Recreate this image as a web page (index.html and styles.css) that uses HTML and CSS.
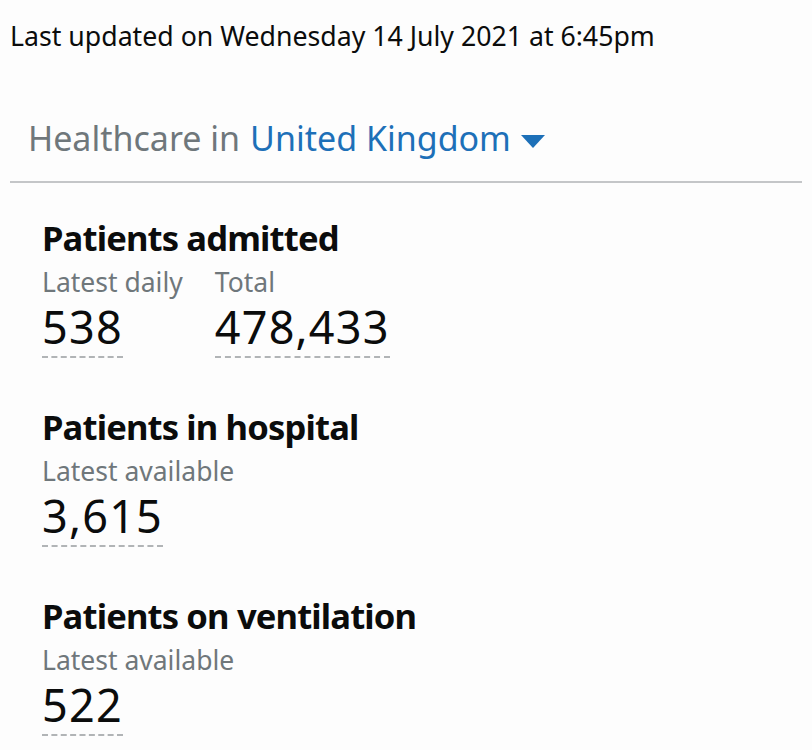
FILE: index.html
```html
<!DOCTYPE html>
<html lang="en">
<head>
<meta charset="utf-8">
<title>Healthcare</title>
<link rel="stylesheet" href="styles.css">
</head>
<body>
<div class="page">
  <p class="updated">Last updated on Wednesday 14 July 2021 at 6:45pm</p>
  <div class="area">
    <span class="area-label">Healthcare in</span>
    <span class="area-link">United Kingdom<svg class="caret" width="24" height="15" viewBox="0 0 24 15"><path d="M0 1 L24 1 L12 14 Z" fill="#1d70b8"/></svg></span>
  </div>
  <div class="cards">
    <section class="card">
      <h2 class="card-title">Patients admitted</h2>
      <div class="metrics">
        <div class="metric">
          <div class="metric-label">Latest daily</div>
          <div class="metric-value">538</div>
        </div>
        <div class="metric">
          <div class="metric-label">Total</div>
          <div class="metric-value">478,433</div>
        </div>
      </div>
    </section>
    <section class="card">
      <h2 class="card-title">Patients in hospital</h2>
      <div class="metrics">
        <div class="metric">
          <div class="metric-label">Latest available</div>
          <div class="metric-value">3,615</div>
        </div>
      </div>
    </section>
    <section class="card">
      <h2 class="card-title">Patients on ventilation</h2>
      <div class="metrics">
        <div class="metric">
          <div class="metric-label">Latest available</div>
          <div class="metric-value">522</div>
        </div>
      </div>
    </section>
  </div>
</div>
</body>
</html>
```
FILE: styles.css
```css
html, body {
  margin: 0;
  padding: 0;
  background: #fdfdfd;
}
body {
  font-family: "Noto Sans", "Liberation Sans", sans-serif;
  color: #0b0c0c;
}
.page {
  padding: 0 10px;
}
.updated {
  margin: 0;
  padding-top: 16px;
  font-size: 26.7px;
  line-height: 40px;
}
.area {
  margin-top: 61px;
  padding: 0 0 22px 18px;
  border-bottom: 2px solid #c4c6c8;
  font-size: 34px;
  line-height: 42px;
  display: flex;
  align-items: center;
  gap: 10px;
}
.area-label {
  color: #6f777b;
}
.area-link {
  color: #1d70b8;
  display: inline-flex;
  align-items: center;
  gap: 10px;
}
.caret {
  display: block;
  margin-top: 6px;
}
.cards {
  padding-left: 32px;
  padding-top: 30px;
}
.card {
  height: 189px;
}
.card-title {
  margin: 0;
  font-size: 34.6px;
  font-weight: 700;
  line-height: 50px;
  letter-spacing: -0.85px;
}
.metrics {
  display: flex;
  gap: 32px;
}
.metric-label {
  color: #6f777b;
  font-size: 26.5px;
  line-height: 38px;
}
.metric-value {
  display: inline-block;
  font-size: 45px;
  line-height: 46px;
  letter-spacing: 1.2px;
  padding-top: 3px;
  padding-bottom: 6px;
  border-bottom: 2px dashed #b1b4b6;
}
```
